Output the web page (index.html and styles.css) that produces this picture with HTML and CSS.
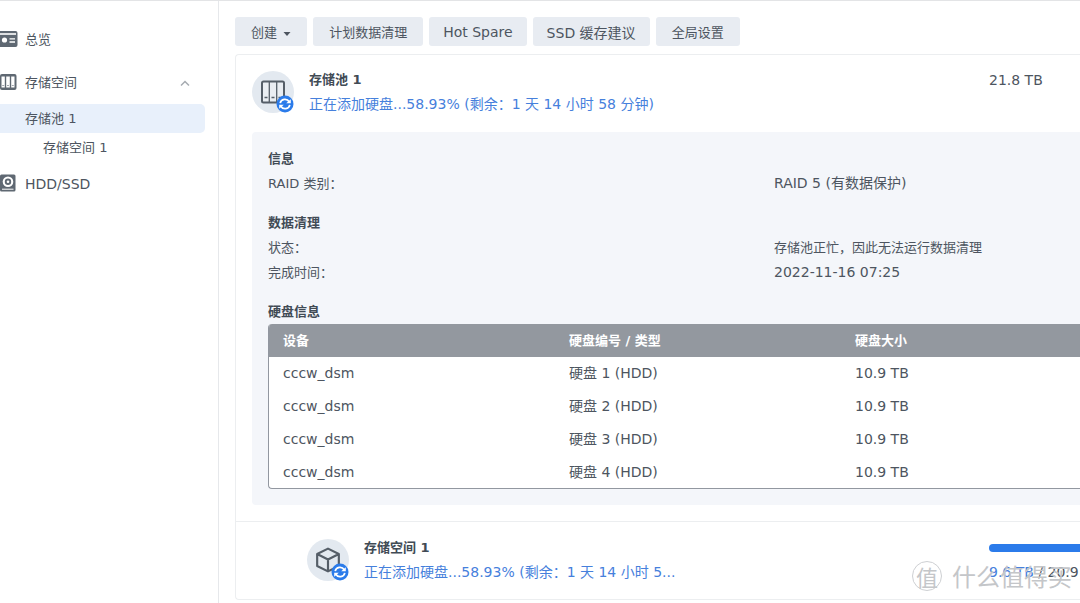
FILE: index.html
```html
<!DOCTYPE html>
<html lang="zh-CN">
<head>
<meta charset="utf-8">
<meta name="viewport" content="width=device-width, initial-scale=1">
<title>存储管理器</title>
<link rel="stylesheet" href="styles.css">
</head>
<body>
<svg class="defs" aria-hidden="true">
  <symbol id="sync" viewBox="0 0 18 18">
    <circle cx="9" cy="9" r="8.5" fill="#2b7bea"/>
    <path d="M4.2 8.2C5 3.7 11 3 13.2 6.7M13.8 9.8C13 14.3 7 15 4.8 11.3" fill="none" stroke="#fff" stroke-width="1.7"/>
    <path d="M14.8 4.2v4h-4.6zM3.2 13.8v-4h4.6z" fill="#fff"/>
  </symbol>
</svg>
<div class="app">
  <nav class="sidebar" aria-label="导航">
    <a class="nav-item" href="#overview">
      <svg class="nav-icon" viewBox="0 0 18 18"><rect x="-2" y="1" width="19.500" height="16" rx="2" fill="#5f6872"/><path d="M0 4h16" stroke="#fff" stroke-width="1.6"/><circle cx="4.5" cy="10" r="2.6" fill="#fff"/><path d="M9.5 8.8h5.500M9.500 12h5.500" stroke="#fff" stroke-width="1.300"/></svg>
      <span>总览</span>
    </a>
    <a class="nav-item" href="#storage">
      <svg class="nav-icon" viewBox="0 0 18 18"><rect x="0" y="1" width="16.500" height="16" rx="2" fill="#5f6872"/><path d="M1.500 3.500h3.300v11H1.500zM6.200 3.500h3.600v11H6.200zM11.200 3.500h3.300v11h-3.300z" fill="#fff"/><path d="M2.200 12.500h2M7 12.500h2M11.800 12.500h2" stroke="#a0a6ad"/></svg>
      <span>存储空间</span>
      <svg class="chevron" viewBox="0 0 12 8"><path d="M2 6.500L6 2.500l4 4" fill="none" stroke="#a6abb1" stroke-width="1.500"/></svg>
    </a>
    <a class="nav-sub active" href="#pool" aria-current="page">存储池 1</a>
    <a class="nav-sub nested" href="#volume">存储空间 1</a>
    <a class="nav-item wide" href="#hdd">
      <svg class="nav-icon" viewBox="0 0 18 18"><rect x="0" y="0.500" width="15.500" height="17" rx="1.500" fill="#5f6872"/><circle cx="8" cy="7.800" r="5.300" fill="#fff"/><circle cx="8" cy="7.800" r="3.200" fill="#5f6872"/><circle cx="8" cy="7.800" r="1.300" fill="#fff"/><path d="M2 15.200h11.500" stroke="#fff"/></svg>
      <span>HDD/SSD</span>
    </a>
  </nav>
  <main class="main">
    <div class="toolbar">
      <button class="btn" type="button">创建 <svg class="caret" viewBox="0 0 8 4"><path d="M0.500 0h7L4 4z" fill="#4d5560"/></svg></button>
      <button class="btn" type="button">计划数据清理</button>
      <button class="btn wide" type="button">Hot Spare</button>
      <button class="btn wide" type="button">SSD 缓存建议</button>
      <button class="btn" type="button">全局设置</button>
    </div>
    <div class="card">
      <section class="pool">
        <header class="row">
          <div class="badge">
            <svg class="glyph" viewBox="0 0 24 24"><rect x="1" y="1.500" width="22" height="21" rx="1.500" fill="#e9edf2" stroke="#555e68" stroke-width="2"/><path d="M8.300 2v20M15.700 2v20" stroke="#555e68" stroke-width="1.300"/><path d="M3.500 17.500h3M10.500 17.500h3M17.500 17.500h3" stroke="#555e68" stroke-width="1.500"/></svg>
            <svg class="sync"><use href="#sync"/></svg>
          </div>
          <div class="heading">
            <h2 class="title">存储池 1</h2>
            <p class="progress wide">正在添加硬盘...58.93% (剩余：1 天 14 小时 58 分钟)</p>
          </div>
          <div class="capacity wide">21.8 TB</div>
        </header>
        <div class="panel">
          <h3 class="title">信息</h3>
          <dl class="facts">
            <dt>RAID 类别：</dt><dd class="wide">RAID 5 (有数据保护)</dd>
          </dl>
          <h3 class="title">数据清理</h3>
          <dl class="facts">
            <dt>状态：</dt><dd>存储池正忙，因此无法运行数据清理</dd>
            <dt>完成时间：</dt><dd class="wide">2022-11-16 07:25</dd>
          </dl>
          <h3 class="title">硬盘信息</h3>
          <div class="table-frame">
            <table class="disks">
              <thead><tr><th>设备</th><th>硬盘编号 / 类型</th><th>硬盘大小</th></tr></thead>
              <tbody class="wide">
                <tr><td>cccw_dsm</td><td>硬盘 1 (HDD)</td><td>10.9 TB</td></tr>
                <tr><td>cccw_dsm</td><td>硬盘 2 (HDD)</td><td>10.9 TB</td></tr>
                <tr><td>cccw_dsm</td><td>硬盘 3 (HDD)</td><td>10.9 TB</td></tr>
                <tr><td>cccw_dsm</td><td>硬盘 4 (HDD)</td><td>10.9 TB</td></tr>
              </tbody>
            </table>
          </div>
        </div>
      </section>
      <section class="row volume">
        <div class="badge">
          <svg class="glyph cube" viewBox="0 0 24 24"><path d="M12 1.500L22 6.500v11L12 22.500 2 17.500v-11zM2 6.500l10 5 10-5M12 11.500v11" fill="none" stroke="#555e68" stroke-width="2" stroke-linejoin="round"/></svg>
          <svg class="sync"><use href="#sync"/></svg>
        </div>
        <div class="heading">
          <h2 class="title">存储空间 1</h2>
          <p class="progress wide">正在添加硬盘...58.93% (剩余：1 天 14 小时 5...</p>
        </div>
        <div class="capacity">
          <div class="bar"></div>
          <div class="usage wide"><span class="used">9.6 TB</span> / 20.9</div>
        </div>
      </section>
    </div>
  </main>
  <div class="watermark" aria-hidden="true"><span class="seal">值</span><span>什么值得买</span></div>
</div>
</body>
</html>
```
FILE: styles.css
```css
* { box-sizing: border-box; }
body {
  margin: 0;
  background: #fff;
  color: #4d5560;
  font: 13px/24px "DejaVu Sans", "Noto Sans CJK SC", sans-serif;
}
h2, h3, p, dl, dd { margin: 0; }
a { color: inherit; text-decoration: none; }
.wide { font-size: 14px; }
.defs { position: absolute; width: 0; height: 0; }
.app {
  position: relative;
  display: flex;
  min-height: 100vh;
  overflow: hidden;
  border-top: 1px solid #e3e4e6;
}
.sidebar {
  flex: 0 0 219px;
  padding: 17px 13px 0 0;
  border-right: 1px solid #e6e8eb;
}
.nav-item {
  display: flex;
  align-items: center;
  gap: 7px;
  height: 43px;
}
.nav-icon { width: 18px; height: 18px; margin-bottom: 2px; }
.chevron { width: 12px; height: 8px; margin-left: auto; margin-right: 14px; }
.nav-sub { display: block; padding-left: 25px; line-height: 29px; }
.active { background: #e8f0fb; border-radius: 0 5px 5px 0; }
.nested { padding-left: 43px; }
.main { flex: 1; min-width: 0; padding: 16px 0 0 16px; }
.toolbar { display: flex; gap: 6px; margin-bottom: 8px; }
.btn {
  height: 29px;
  padding: 0 16px;
  border: 0;
  border-radius: 3px;
  background: #e8ecf2;
  color: inherit;
  font-family: inherit;
  font-size: 13px;
  white-space: nowrap;
}
.btn.wide { padding: 0 14px; font-size: 14px; }
.caret { width: 8px; height: 4px; margin-left: 2px; vertical-align: middle; }
.card {
  border: 1px solid #eceef0;
  border-right: 0;
  border-radius: 4px 0 0 4px;
}
.pool { padding: 0 0 16px 16px; border-bottom: 1px solid #eceef0; }
.row { display: flex; gap: 15px; padding: 13px 0 16px; }
.badge {
  position: relative;
  flex: none;
  display: grid;
  place-items: center;
  width: 42px;
  height: 42px;
  margin-top: 3px;
  border-radius: 50%;
  background: #e3e9f0;
}
.glyph { width: 24px; height: 24px; }
.cube { width: 26px; height: 26px; }
.sync { position: absolute; right: 0; bottom: 0; width: 18px; height: 18px; }
.heading { flex: 1; min-width: 0; }
.title { font-size: 13px; font-weight: 700; color: #414b55; }
.progress { color: #4680dc; white-space: nowrap; }
.capacity { flex: 0 0 91px; white-space: nowrap; }
.panel {
  padding: 14px 0 16px 16px;
  border-radius: 4px 0 0 4px;
  background: #f4f6fa;
  line-height: 25px;
}
.facts {
  display: grid;
  grid-template-columns: 506px 1fr;
  margin-bottom: 14px;
}
.table-frame {
  overflow: hidden;
  border: 1px solid #9297a0;
  border-width: 0 0 1px 1px;
  border-radius: 4px 0 0 4px;
  background: #fff;
}
.disks { width: 100%; table-layout: fixed; border-collapse: collapse; }
.disks th, .disks td { height: 33px; padding: 0 0 0 14px; text-align: left; }
.disks th { background: #93989f; color: #fff; width: 286px; }
.disks th:last-child { width: auto; }
.disks tr:last-child td { height: 32px; }
.volume { padding: 14px 0 15px 71px; }
.bar { height: 8px; margin: 8px 0; border-radius: 4px 0 0 4px; background: #2b7bea; }
.used { color: #4680dc; }
.watermark {
  position: absolute;
  right: 8px;
  bottom: 11px;
  display: flex;
  align-items: center;
  gap: 10px;
  color: #c4c6c9;
  font: 24px/32px "Noto Sans CJK SC", sans-serif;
  white-space: nowrap;
  pointer-events: none;
}
.seal {
  width: 30px;
  height: 30px;
  border: 1px solid #ced0d3;
  border-radius: 50%;
  font-size: 22px;
  line-height: 28px;
  text-align: center;
}
```
